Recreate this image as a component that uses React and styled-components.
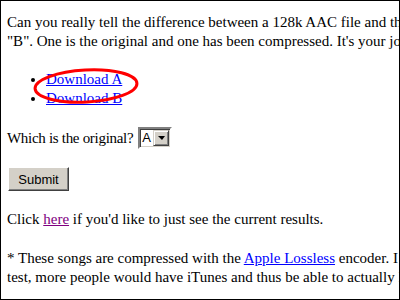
import styled, { createGlobalStyle } from 'styled-components';

const GlobalStyle = createGlobalStyle`
  html, body {
    margin: 0;
    padding: 0;
    background: #fff;
  }
`;

const Page = styled.div`
  position: relative;
  width: 400px;
  height: 300px;
  box-sizing: border-box;
  border: 1px solid #000;
  overflow: hidden;
  padding: 12px 0 0 6px;
  font-family: 'Liberation Serif', 'Times New Roman', serif;
  font-size: 15px;
  line-height: 19px;
  color: #000;
  background: #fff;
`;

const Para = styled.p`
  margin: 0 0 ${(p) => p.$gap || 19}px 0;
  white-space: nowrap;
`;

const Link = styled.a`
  color: ${(p) => (p.$visited ? '#800080' : '#0000ff')};
  text-decoration: underline;
`;

const List = styled.ul`
  position: relative;
  margin: 0 0 19px 0;
  padding-left: 39px;
  list-style: disc;
`;

const Circle = styled.svg`
  position: absolute;
  left: 25px;
  top: -3px;
  pointer-events: none;
`;

const Row = styled.div`
  display: flex;
  align-items: center;
  gap: 5px;
  height: 22px;
  margin-bottom: 18px;
`;

const Label = styled.span`
  letter-spacing: -0.3px;
`;

const Select = styled.div`
  display: flex;
  align-items: stretch;
  width: 34px;
  height: 22px;
  box-sizing: border-box;
  border-style: solid;
  border-width: 2px;
  border-color: #808080 #ffffff #ffffff #808080;
  box-shadow: inset 1px 1px 0 #404040, inset -1px -1px 0 #d4d0c8;
  background: #fff;
`;

const SelectValue = styled.span`
  flex: 1;
  padding-left: 2px;
  font-family: 'Liberation Sans', Arial, sans-serif;
  font-size: 13px;
  line-height: 18px;
`;

const SelectArrow = styled.span`
  display: flex;
  align-items: center;
  justify-content: center;
  width: 16px;
  margin: 1px 1px 1px 0;
  box-sizing: border-box;
  background: #d4d0c8;
  border-style: solid;
  border-width: 1px;
  border-color: #d4d0c8 #404040 #404040 #d4d0c8;
  box-shadow: inset 1px 1px 0 #fff, inset -1px -1px 0 #808080;

  &::after {
    content: '';
    border-left: 4px solid transparent;
    border-right: 3px solid transparent;
    border-top: 4px solid #000;
  }
`;

const Button = styled.button`
  display: block;
  width: 61px;
  height: 24px;
  margin: 0 0 19px 1px;
  padding: 0;
  box-sizing: border-box;
  background: #d4d0c8;
  border-style: solid;
  border-width: 1px;
  border-color: #fff #404040 #404040 #fff;
  box-shadow: inset -1px -1px 0 #808080;
  font-family: 'Liberation Sans', Arial, sans-serif;
  font-size: 13px;
  color: #000;
`;

export default function App() {
  return (
    <>
      <GlobalStyle />
      <Page>
        <Para>
          Can you really tell the difference between a 128k AAC file and the original*? Below are two files, "A" and
          <br />
          "B". One is the original and one has been compressed. It's your job to figure out which is which.
        </Para>
        <List>
          <li>
            <Link href="#">Download A</Link>
          </li>
          <li>
            <Link href="#">Download B</Link>
          </li>
          <Circle width="110" height="40" viewBox="0 0 110 40">
            <ellipse cx="54" cy="19" rx="51" ry="16" fill="none" stroke="#ff0000" strokeWidth="3" transform="rotate(-3 54 19)" />
          </Circle>
        </List>
        <Row>
          <Label>Which is the original?</Label>
          <Select>
            <SelectValue>A</SelectValue>
            <SelectArrow />
          </Select>
        </Row>
        <Button type="button">Submit</Button>
        <Para $gap={20}>
          Click <Link href="#" $visited>here</Link> if you'd like to just see the current results.
        </Para>
        <Para>
          * These songs are compressed with the <Link href="#">Apple Lossless</Link> encoder. I chose this format so that, for the
          <br />
          test, more people would have iTunes and thus be able to actually listen to the files.
        </Para>
      </Page>
    </>
  );
}
